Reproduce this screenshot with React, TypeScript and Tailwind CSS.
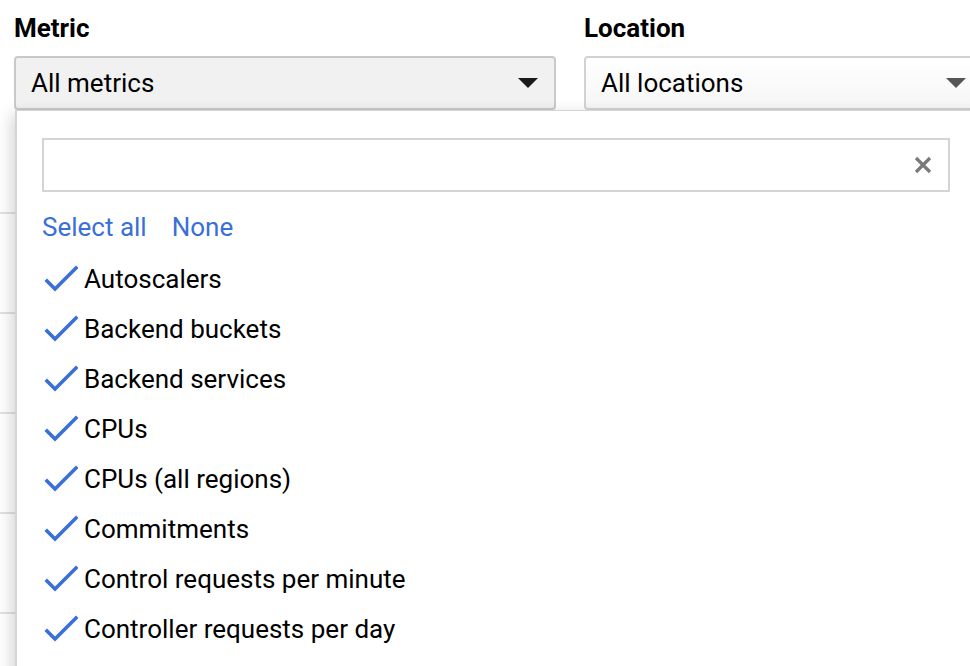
import React from "react";

const items = [
  "Autoscalers",
  "Backend buckets",
  "Backend services",
  "CPUs",
  "CPUs (all regions)",
  "Commitments",
  "Control requests per minute",
  "Controller requests per day",
];

function Check() {
  return (
    <svg width="34" height="30" viewBox="0 0 34 30" className="shrink-0 ml-[2px]">
      <polyline
        points="3,17 11,25 32,4"
        fill="none"
        stroke="#3a6fd8"
        strokeWidth="3.6"
        strokeLinecap="square"
      />
    </svg>
  );
}

function Caret({ color }: { color: string }) {
  return (
    <svg width="20" height="10" viewBox="0 0 20 10">
      <polygon points="0,0 20,0 10,10" fill={color} />
    </svg>
  );
}

export default function App() {
  return (
    <div
      className="relative w-[970px] h-[666px] overflow-hidden bg-white text-[#202124]"
      style={{ fontFamily: "Roboto, 'Liberation Sans', sans-serif" }}
    >
      {/* filter bar */}
      <div className="flex gap-[28px] pl-[14px] pt-[13px]">
        <div className="flex flex-col">
          <div className="text-[26px] leading-[30px] font-bold text-black h-[43px]">Metric</div>
          <div className="w-[542px] h-[54px] rounded-[4px] border-2 border-[#c9c9c9] bg-[#f1f1f1] flex items-center justify-between pl-[15px] pr-[16px]">
            <span className="text-[26px] text-black">All metrics</span>
            <Caret color="#1a1a1a" />
          </div>
        </div>
        <div className="flex flex-col">
          <div className="text-[26px] leading-[30px] font-bold text-black h-[43px]">Location</div>
          <div className="w-[420px] h-[54px] rounded-[4px] border-2 border-[#d2d2d2] bg-gradient-to-b from-white to-[#f6f6f6] flex items-center justify-between pl-[15px] pr-[36px]">
            <span className="text-[26px] text-black">All locations</span>
            <Caret color="#555555" />
          </div>
        </div>
      </div>

      {/* table rows behind */}
      <div className="mt-[4px] flex flex-col">
        <div className="h-[100px] border-b-2 border-[#e2e2e2]" />
        <div className="h-[100px] border-b-2 border-[#e2e2e2]" />
        <div className="h-[100px] border-b-2 border-[#e2e2e2]" />
        <div className="h-[100px] border-b-2 border-[#e2e2e2]" />
        <div className="h-[100px] border-b-2 border-[#e2e2e2]" />
      </div>

      {/* dropdown panel */}
      <div className="absolute left-[15px] top-[110px] w-[990px] h-[600px] bg-white border-l-2 border-t border-[#d4d4d4] shadow-[-4px_4px_14px_rgba(0,0,0,0.16)] pl-[25px] pt-[27px]">
        <div className="w-[908px] h-[54px] border-2 border-[#d4d4d4] flex items-center justify-end pr-[15px]">
          <svg width="20" height="20" viewBox="0 0 20 20">
            <path d="M3 3 L17 17 M17 3 L3 17" stroke="#7a7a7a" strokeWidth="3.2" />
          </svg>
        </div>
        <div className="flex gap-[25px] mt-[18px] text-[26px] leading-[34px] text-[#3a6fd8]">
          <span>Select all</span>
          <span>None</span>
        </div>
        <div className="flex flex-col mt-[10px]">
          {items.map((t) => (
            <div key={t} className="h-[50px] flex items-center gap-[6px]">
              <Check />
              <span className="text-[26px] text-black">{t}</span>
            </div>
          ))}
        </div>
      </div>
    </div>
  );
}
